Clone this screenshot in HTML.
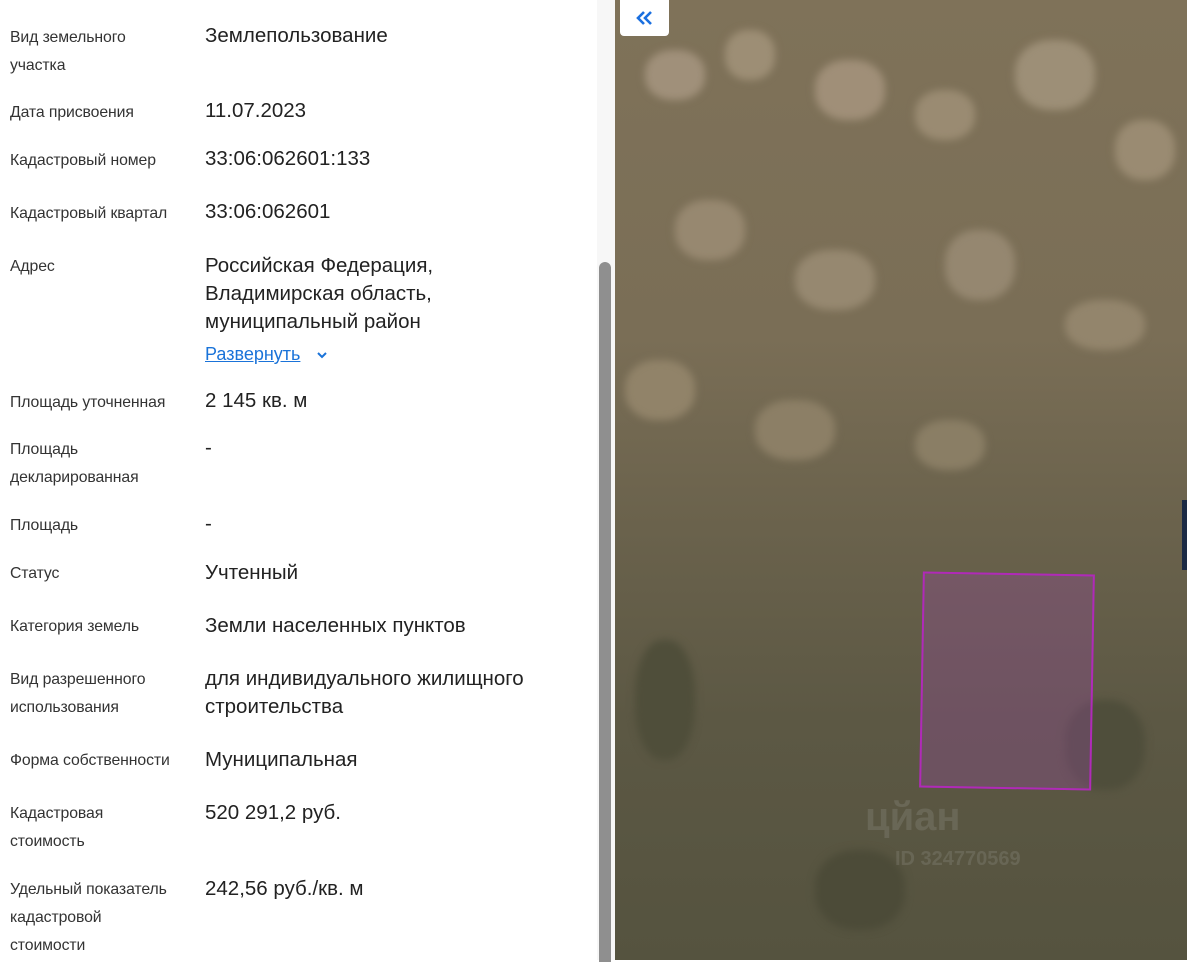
<!DOCTYPE html>
<html><head><meta charset="utf-8"><style>
*{margin:0;padding:0;box-sizing:border-box}
body{width:1187px;height:960px;overflow:hidden;position:relative;background:#fff;font-family:"Liberation Sans",sans-serif}
.l{position:absolute;left:10px;font-size:15.8px;line-height:28px;color:#333;letter-spacing:-0.1px}
.v{position:absolute;left:205px;font-size:20.5px;line-height:28px;color:#222}
#map{position:absolute;left:615px;top:0;width:572px;height:960px;overflow:hidden;
background:linear-gradient(180deg,#7f7259 0%,#7a6e56 35%,#6a624c 55%,#5c5844 75%,#55533f 100%)}
.b{position:absolute;border-radius:45%;filter:blur(4px)}
</style></head><body>
<div class="l" style="top:24px">Вид земельного<br>участка</div><div class="v" style="top:22px">Землепользование</div>
<div class="l" style="top:99px">Дата присвоения</div><div class="v" style="top:97px">11.07.2023</div>
<div class="l" style="top:147px">Кадастровый номер</div><div class="v" style="top:145px">33:06:062601:133</div>
<div class="l" style="top:200px">Кадастровый квартал</div><div class="v" style="top:198px">33:06:062601</div>
<div class="l" style="top:253px">Адрес</div><div class="v" style="top:252px">Российская Федерация,<br>Владимирская область,<br>муниципальный район</div>
<div class="v" style="top:340px;font-size:18px;color:#1a73d9"><span style="text-decoration:underline">Развернуть</span>
<svg width="14" height="10" viewBox="0 0 14 10" style="margin-left:10px"><path d="M3 3l4 4 4-4" stroke="#1a73d9" stroke-width="2" fill="none"/></svg></div>
<div class="l" style="top:389px">Площадь уточненная</div><div class="v" style="top:387px">2 145 кв. м</div>
<div class="l" style="top:436px">Площадь<br>декларированная</div><div class="v" style="top:434px">-</div>
<div class="l" style="top:512px">Площадь</div><div class="v" style="top:510px">-</div>
<div class="l" style="top:560px">Статус</div><div class="v" style="top:559px">Учтенный</div>
<div class="l" style="top:613px">Категория земель</div><div class="v" style="top:612px">Земли населенных пунктов</div>
<div class="l" style="top:666px">Вид разрешенного<br>использования</div><div class="v" style="top:665px">для индивидуального жилищного<br>строительства</div>
<div class="l" style="top:747px">Форма собственности</div><div class="v" style="top:746px">Муниципальная</div>
<div class="l" style="top:800px">Кадастровая<br>стоимость</div><div class="v" style="top:799px">520 291,2 руб.</div>
<div class="l" style="top:876px">Удельный показатель<br>кадастровой<br>стоимости</div><div class="v" style="top:875px">242,56 руб./кв. м</div>
<div style="position:absolute;left:597px;top:0;width:18px;height:960px;background:#f7f7f7"></div>
<div style="position:absolute;left:599px;top:262px;width:12px;height:700px;background:#8f8f8f;border-radius:6px 6px 0 0"></div>
<div id="map">
<div class="b" style="left:30px;top:50px;width:60px;height:50px;background:#a0907a"></div>
<div class="b" style="left:110px;top:30px;width:50px;height:50px;background:#9d8e75"></div>
<div class="b" style="left:200px;top:60px;width:70px;height:60px;background:#a08f78"></div>
<div class="b" style="left:300px;top:90px;width:60px;height:50px;background:#9a8b72"></div>
<div class="b" style="left:400px;top:40px;width:80px;height:70px;background:#9d8f77"></div>
<div class="b" style="left:500px;top:120px;width:60px;height:60px;background:#9a8b72"></div>
<div class="b" style="left:60px;top:200px;width:70px;height:60px;background:#978870"></div>
<div class="b" style="left:180px;top:250px;width:80px;height:60px;background:#968870"></div>
<div class="b" style="left:330px;top:230px;width:70px;height:70px;background:#958770"></div>
<div class="b" style="left:450px;top:300px;width:80px;height:50px;background:#93856c"></div>
<div class="b" style="left:10px;top:360px;width:70px;height:60px;background:#918369"></div>
<div class="b" style="left:140px;top:400px;width:80px;height:60px;background:#8c7f66"></div>
<div class="b" style="left:300px;top:420px;width:70px;height:50px;background:#8a7e65"></div>
<div class="b" style="left:20px;top:640px;width:60px;height:120px;background:#4f4e3a"></div>
<div class="b" style="left:200px;top:850px;width:90px;height:80px;background:#4c4b38"></div>
<div class="b" style="left:450px;top:700px;width:80px;height:90px;background:#4f4e3b"></div>
<div style="position:absolute;left:306px;top:573px;width:172px;height:216px;border:2px solid #b02ab8;background:rgba(150,70,160,0.32);transform:rotate(1deg)"></div>
<div style="position:absolute;left:250px;top:795px;font-size:40px;font-weight:bold;color:rgba(200,200,200,0.15)">цйан</div>
<div style="position:absolute;left:280px;top:848px;font-size:20px;font-weight:bold;color:rgba(200,200,200,0.15)">ID 324770569</div>
<div style="position:absolute;left:5px;top:0;width:49px;height:36px;background:#fff;border-radius:0 0 4px 4px;display:flex;align-items:center;justify-content:center">
<svg width="18" height="16" viewBox="0 0 18 16"><path d="M8 2L2 8l6 6M15 2L9 8l6 6" stroke="#1a6fe0" stroke-width="2.6" fill="none"/></svg></div>
<div style="position:absolute;right:0;top:500px;width:5px;height:70px;background:#1b2a44"></div>
</div>
</body></html>
